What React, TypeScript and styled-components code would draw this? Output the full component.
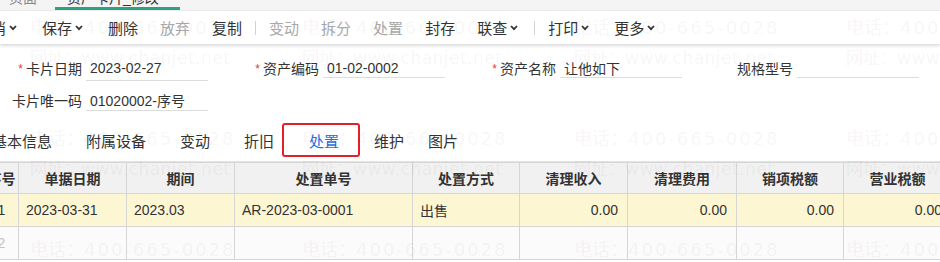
import React from "react";
import styled, { createGlobalStyle, css } from "styled-components";

const GlobalStyle = createGlobalStyle`
  html, body {
    margin: 0;
    padding: 0;
    background: #ffffff;
    overflow: hidden;
  }
  body {
    font-family: "Liberation Sans", "Noto Sans CJK SC", sans-serif;
    color: #333;
  }
  * {
    box-sizing: border-box;
  }
`;

// 整个页面
const Page = styled.div`
  position: relative;
  width: 940px;
  height: 262px;
  overflow: hidden;
  background: #ffffff;
`;

// 顶部页签条（只露出下半部分）
const PageTabs = styled.div`
  height: 10px;
  display: flex;
  align-items: flex-end;
  background: #f4f4f4;
  overflow: hidden;
`;

const PageTab = styled.div<{ $active?: boolean }>`
  height: 10px;
  display: flex;
  align-items: flex-end;
  flex: none;
  width: ${(p) => (p.$active ? "125px" : "55px")};
  padding: ${(p) => (p.$active ? "0 12px" : "0 0 0 9px")};
  border-bottom: 3px solid ${(p) => (p.$active ? "#2ba282" : "transparent")};
  font-size: 14px;
  line-height: 14px;
  color: ${(p) => (p.$active ? "#333" : "#888")};
  white-space: nowrap;

  span {
    margin-bottom: 2px;
  }
`;

// 工具栏
const Toolbar = styled.div`
  position: relative;
  z-index: 1;
  height: 34px;
  display: flex;
  align-items: center;
  background: #ffffff;
  border-top: 1px solid #ececec;
  box-shadow: 0 2px 3px rgba(0, 0, 0, 0.14);
`;

const ToolGroup = styled.div`
  display: flex;
  align-items: center;
  margin-left: -35px;
`;

const ToolButton = styled.button<{ $disabled?: boolean; $menu?: boolean }>`
  display: inline-flex;
  align-items: center;
  flex: none;
  height: 33px;
  padding: ${(p) => (p.$menu ? "0 14px 0 11px" : "0 11px")};
  border: none;
  background: transparent;
  font-family: inherit;
  font-size: 15px;
  color: ${(p) => (p.$disabled ? "#a8a8a8" : "#333")};
  white-space: nowrap;
  cursor: pointer;

  svg {
    margin-left: 3px;
  }
`;

const ToolDivider = styled.span`
  width: 1px;
  height: 14px;
  margin: 0 2px;
  background: #d2d2d2;
`;

// 表单区
const Form = styled.div`
  display: grid;
  grid-template-columns: repeat(4, 196px);
  grid-auto-rows: 32px;
  column-gap: 41px;
  padding: 8px 0 7px 12px;
`;

const Field = styled.div`
  display: flex;
  align-items: center;
`;

const Label = styled.label`
  width: 70px;
  flex: none;
  text-align: right;
  font-size: 14px;
  color: #333;
  white-space: nowrap;
`;

const Required = styled.span`
  color: #e23c39;
  font-size: 12px;
  margin-right: 3px;
  position: relative;
  top: -1px;
`;

const Input = styled.div<{ $h: number }>`
  width: 122px;
  height: ${(p) => p.$h}px;
  margin-left: 4px;
  padding-left: 4px;
  display: flex;
  align-items: center;
  border-bottom: 1px solid #dcdcdc;
  font-size: 14px;
  color: #333;
  white-space: nowrap;
`;

// 子页签
const TabBar = styled.div`
  display: flex;
  height: 39px;
  padding-bottom: 4px;
  margin-left: -25px;
  border-bottom: 1px solid #e3e3e3;
`;

const Tab = styled.div<{ $active?: boolean; $pl?: number }>`
  display: flex;
  align-items: center;
  flex: none;
  height: 34px;
  padding: 0 17px 0 ${(p) => (p.$pl ?? 17)}px;
  font-size: 15px;
  color: #333;
  white-space: nowrap;

  ${(p) =>
    p.$active &&
    css`
      margin: 0 -3px 0 -9px;
      padding: 0 19px 0 25px;
      border: 2px solid #e2202a;
      border-radius: 3px;
      color: #1f6fdc;
    `}
`;

// 表格
const Grid = styled.table`
  margin-left: -16px;
  width: 967px;
  border-collapse: collapse;
  table-layout: fixed;
  font-size: 14px;
`;

const Th = styled.th`
  height: 31px;
  padding: 0;
  background: #f1f1f1;
  border: 1px solid #d6d6d6;
  font-size: 14px;
  font-weight: bold;
  color: #333;
  text-align: center;
  white-space: nowrap;
  overflow: hidden;
`;

const Row = styled.tr<{ $selected?: boolean }>`
  background: ${(p) => (p.$selected ? "#fdf6d3" : "#fbfbfb")};
`;

const Td = styled.td<{ $align?: "left" | "right" | "center"; $muted?: boolean }>`
  height: 33px;
  padding: ${(p) => (p.$align === "center" ? "0" : "0 9px 0 7px")};
  border: 1px solid #d6d6d6;
  text-align: ${(p) => p.$align ?? "left"};
  font-size: 14px;
  color: ${(p) => (p.$muted ? "#c4c4c4" : "#333")};
  white-space: nowrap;
  overflow: hidden;
`;

// 水印
const Watermark = styled.div`
  position: absolute;
  left: 30px;
  top: 17px;
  z-index: 5;
  display: grid;
  grid-template-columns: repeat(4, 272px);
  grid-auto-rows: 111px;
  pointer-events: none;
  color: rgba(0, 0, 0, 0.055);
  font-family: "DejaVu Sans", "Noto Sans CJK SC", sans-serif;
  white-space: nowrap;
`;

const WmCell = styled.div`
  display: flex;
  flex-direction: column;
`;

const WmPhone = styled.div`
  font-size: 18px;
  line-height: 22px;

  span {
    letter-spacing: 2px;
  }
`;

const WmUrl = styled.div`
  margin-top: 8px;
  font-size: 17px;
  line-height: 22px;

  span {
    letter-spacing: 0.5px;
  }
`;

const Chevron = () => (
  <svg width="8" height="6" viewBox="0 0 8 6">
    <polyline points="1,1 4,4.2 7,1" fill="none" stroke="#333" strokeWidth="1.8" />
  </svg>
);

const tools = [
  { label: "取消", menu: true },
  { label: "保存", menu: true },
  { label: "删除" },
  { label: "放弃", disabled: true },
  { label: "复制" },
  { divider: true },
  { label: "变动", disabled: true },
  { label: "拆分", disabled: true },
  { label: "处置", disabled: true },
  { label: "封存" },
  { label: "联查", menu: true },
  { divider: true },
  { label: "打印", menu: true },
  { label: "更多", menu: true },
];

const tabs = ["基本信息", "附属设备", "变动", "折旧", "处置", "维护", "图片"];

const columns = [
  { title: "序号", width: 34 },
  { title: "单据日期", width: 108 },
  { title: "期间", width: 108 },
  { title: "处置单号", width: 178 },
  { title: "处置方式", width: 107 },
  { title: "清理收入", width: 108 },
  { title: "清理费用", width: 109 },
  { title: "销项税额", width: 107 },
  { title: "营业税额", width: 108 },
];

export default function App() {
  return (
    <Page>
      <GlobalStyle />

      <PageTabs>
        <PageTab>
          <span>页面</span>
        </PageTab>
        <PageTab $active>
          <span>资产卡片_修改</span>
        </PageTab>
      </PageTabs>

      <Toolbar>
        <ToolGroup>
          {tools.map((t, i) =>
            t.divider ? (
              <ToolDivider key={i} />
            ) : (
              <ToolButton key={i} $menu={t.menu} $disabled={t.disabled}>
                {t.label}
                {t.menu && <Chevron />}
              </ToolButton>
            )
          )}
        </ToolGroup>
      </Toolbar>

      <Form>
        <Field>
          <Label>
            <Required>*</Required>卡片日期
          </Label>
          <Input $h={26}>2023-02-27</Input>
        </Field>
        <Field>
          <Label>
            <Required>*</Required>资产编码
          </Label>
          <Input $h={20}>01-02-0002</Input>
        </Field>
        <Field>
          <Label>
            <Required>*</Required>资产名称
          </Label>
          <Input $h={20}>让他如下</Input>
        </Field>
        <Field>
          <Label>规格型号</Label>
          <Input $h={20} />
        </Field>
        <Field>
          <Label>卡片唯一码</Label>
          <Input $h={22}>01020002-序号</Input>
        </Field>
      </Form>

      <TabBar>
        {tabs.map((t) => (
          <Tab key={t} $active={t === "处置"} $pl={t === "图片" ? 7 : undefined}>
            {t}
          </Tab>
        ))}
      </TabBar>

      <Grid>
        <colgroup>
          {columns.map((c) => (
            <col key={c.title} style={{ width: c.width }} />
          ))}
        </colgroup>
        <thead>
          <tr>
            {columns.map((c) => (
              <Th key={c.title}>{c.title}</Th>
            ))}
          </tr>
        </thead>
        <tbody>
          <Row $selected>
            <Td $align="center">1</Td>
            <Td>2023-03-31</Td>
            <Td>2023.03</Td>
            <Td>AR-2023-03-0001</Td>
            <Td>出售</Td>
            <Td $align="right">0.00</Td>
            <Td $align="right">0.00</Td>
            <Td $align="right">0.00</Td>
            <Td $align="right">0.00</Td>
          </Row>
          <Row>
            <Td $align="center" $muted>
              2
            </Td>
            <Td />
            <Td />
            <Td />
            <Td />
            <Td />
            <Td />
            <Td />
            <Td />
          </Row>
        </tbody>
      </Grid>

      <Watermark>
        {Array.from({ length: 12 }).map((_, i) => (
          <WmCell key={i}>
            <WmPhone>
              电话：<span>400-665-0028</span>
            </WmPhone>
            {i < 8 && (
              <WmUrl>
                网址：<span>www.chanjet.net</span>
              </WmUrl>
            )}
          </WmCell>
        ))}
      </Watermark>
    </Page>
  );
}
